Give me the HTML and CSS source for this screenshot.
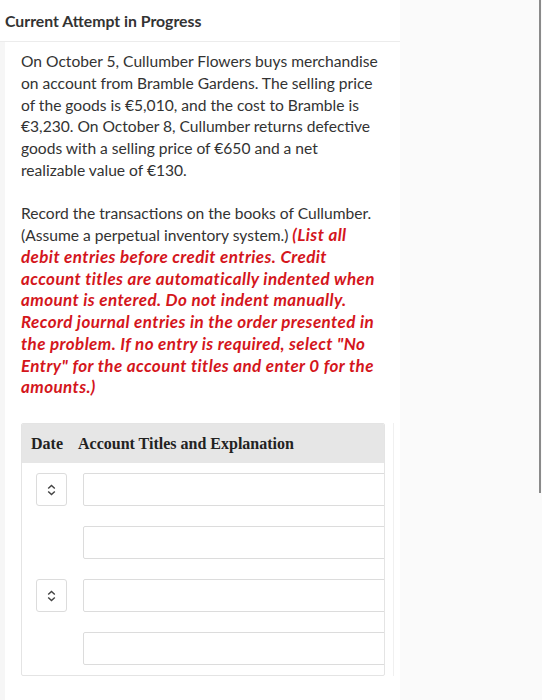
FILE: index.html
```html
<!DOCTYPE html>
<html>
<head>
<meta charset="utf-8">
<link rel="stylesheet" href="styles.css">
</head>
<body>
<div class="page">
  <div class="main">
    <div class="header">Current Attempt in Progress</div>
    <div class="body">
      <div class="card">
        <p class="para">On October 5, Cullumber Flowers buys merchandise on account from Bramble Gardens. The selling price of the goods is €5,010, and the cost to Bramble is €3,230. On October 8, Cullumber returns defective goods with a selling price of €650 and a net realizable value of €130.</p>
        <p class="para">Record the transactions on the books of Cullumber. (Assume a perpetual inventory system.) <span class="red">(List all debit entries before credit entries. Credit account titles are automatically indented when amount is entered. Do not indent manually. Record journal entries in the order presented in the problem. If no entry is required, select "No Entry" for the account titles and enter 0 for the amounts.)</span></p>
        <div class="tablewrap">
          <div class="table">
            <div class="thead"><span class="th-date">Date</span><span class="th-acct">Account Titles and Explanation</span></div>
            <div class="tbody">
              <div class="row">
                <div class="datecell"><div class="select"><svg width="9" height="12" viewBox="0 0 9 12"><path d="M1.2 4.6 L4.5 1.4 L7.8 4.6 M1.2 7.4 L4.5 10.6 L7.8 7.4" fill="none" stroke="#444" stroke-width="1.4"/></svg></div></div>
                <div class="input"></div>
              </div>
              <div class="row">
                <div class="datecell"></div>
                <div class="input"></div>
              </div>
              <div class="row">
                <div class="datecell"><div class="select"><svg width="9" height="12" viewBox="0 0 9 12"><path d="M1.2 4.6 L4.5 1.4 L7.8 4.6 M1.2 7.4 L4.5 10.6 L7.8 7.4" fill="none" stroke="#444" stroke-width="1.4"/></svg></div></div>
                <div class="input"></div>
              </div>
              <div class="row">
                <div class="datecell"></div>
                <div class="input"></div>
              </div>
            </div>
          </div>
        </div>
      </div>
    </div>
  </div>
  <div class="side"></div>
</div>
<div class="scrollthumb"></div>
</body>
</html>
```
FILE: styles.css
```css
html, body {
  margin: 0;
  padding: 0;
  background: #fafafa;
}
body {
  font-family: Lato, "Open Sans", sans-serif;
  color: #333;
  overflow: hidden;
}
.page {
  display: flex;
  height: 700px;
}
.main {
  width: 400px;
  display: flex;
  flex-direction: column;
  background: #f6f6f6;
}
.header {
  height: 42px;
  background: #fff;
  border-bottom: 1px solid #ececec;
  box-sizing: border-box;
  padding-left: 5px;
  font-size: 15.8px;
  font-weight: 700;
  line-height: 41px;
  color: #333;
}
.body {
  flex: 1;
  padding-left: 5px;
  display: flex;
}
.card {
  flex: 1;
  background: #fff;
  padding: 9px 0 0 16px;
}
.para {
  margin: 0 0 21.75px 0;
  font-size: 15.6px;
  line-height: 21.75px;
  width: 360px;
  color: #333;
}
.red {
  color: #d4161c;
  font-size: 17px;
  line-height: 16px;
  font-weight: 700;
  font-style: italic;
  letter-spacing: 0.4px;
}
.tablewrap {
  margin-top: 24px;
  width: 372px;
  border-right: 1px solid #f0f0f0;
}
.table {
  width: 362px;
  border: 1px solid #e4e4e4;
  border-radius: 2px;
  overflow: hidden;
}
.thead {
  height: 39px;
  background: #e6e6e6;
  display: flex;
  align-items: center;
  padding-left: 9px;
  font-family: "Liberation Serif", "Times New Roman", serif;
  font-weight: 700;
  font-size: 16px;
  color: #222;
}
.th-acct {
  margin-left: 15px;
}
.tbody {
  padding: 10px 0 10px 0;
  display: flex;
  flex-direction: column;
  gap: 20px;
}
.row {
  display: flex;
  height: 33px;
}
.datecell {
  width: 61px;
  flex: none;
  padding-left: 14px;
  box-sizing: border-box;
}
.select {
  width: 31px;
  height: 33px;
  box-sizing: border-box;
  border: 1px solid #dcdcdc;
  border-radius: 3px;
  display: flex;
  align-items: center;
  justify-content: center;
}
.input {
  flex: none;
  width: 340px;
  height: 33px;
  box-sizing: border-box;
  border: 1px solid #dcdcdc;
  border-radius: 2px;
}
.side {
  flex: 1;
  background: #fafafa;
}
.scrollthumb {
  position: fixed;
  top: 0;
  right: 1px;
  width: 2px;
  height: 493px;
  background: #8a8a8a;
}
```
